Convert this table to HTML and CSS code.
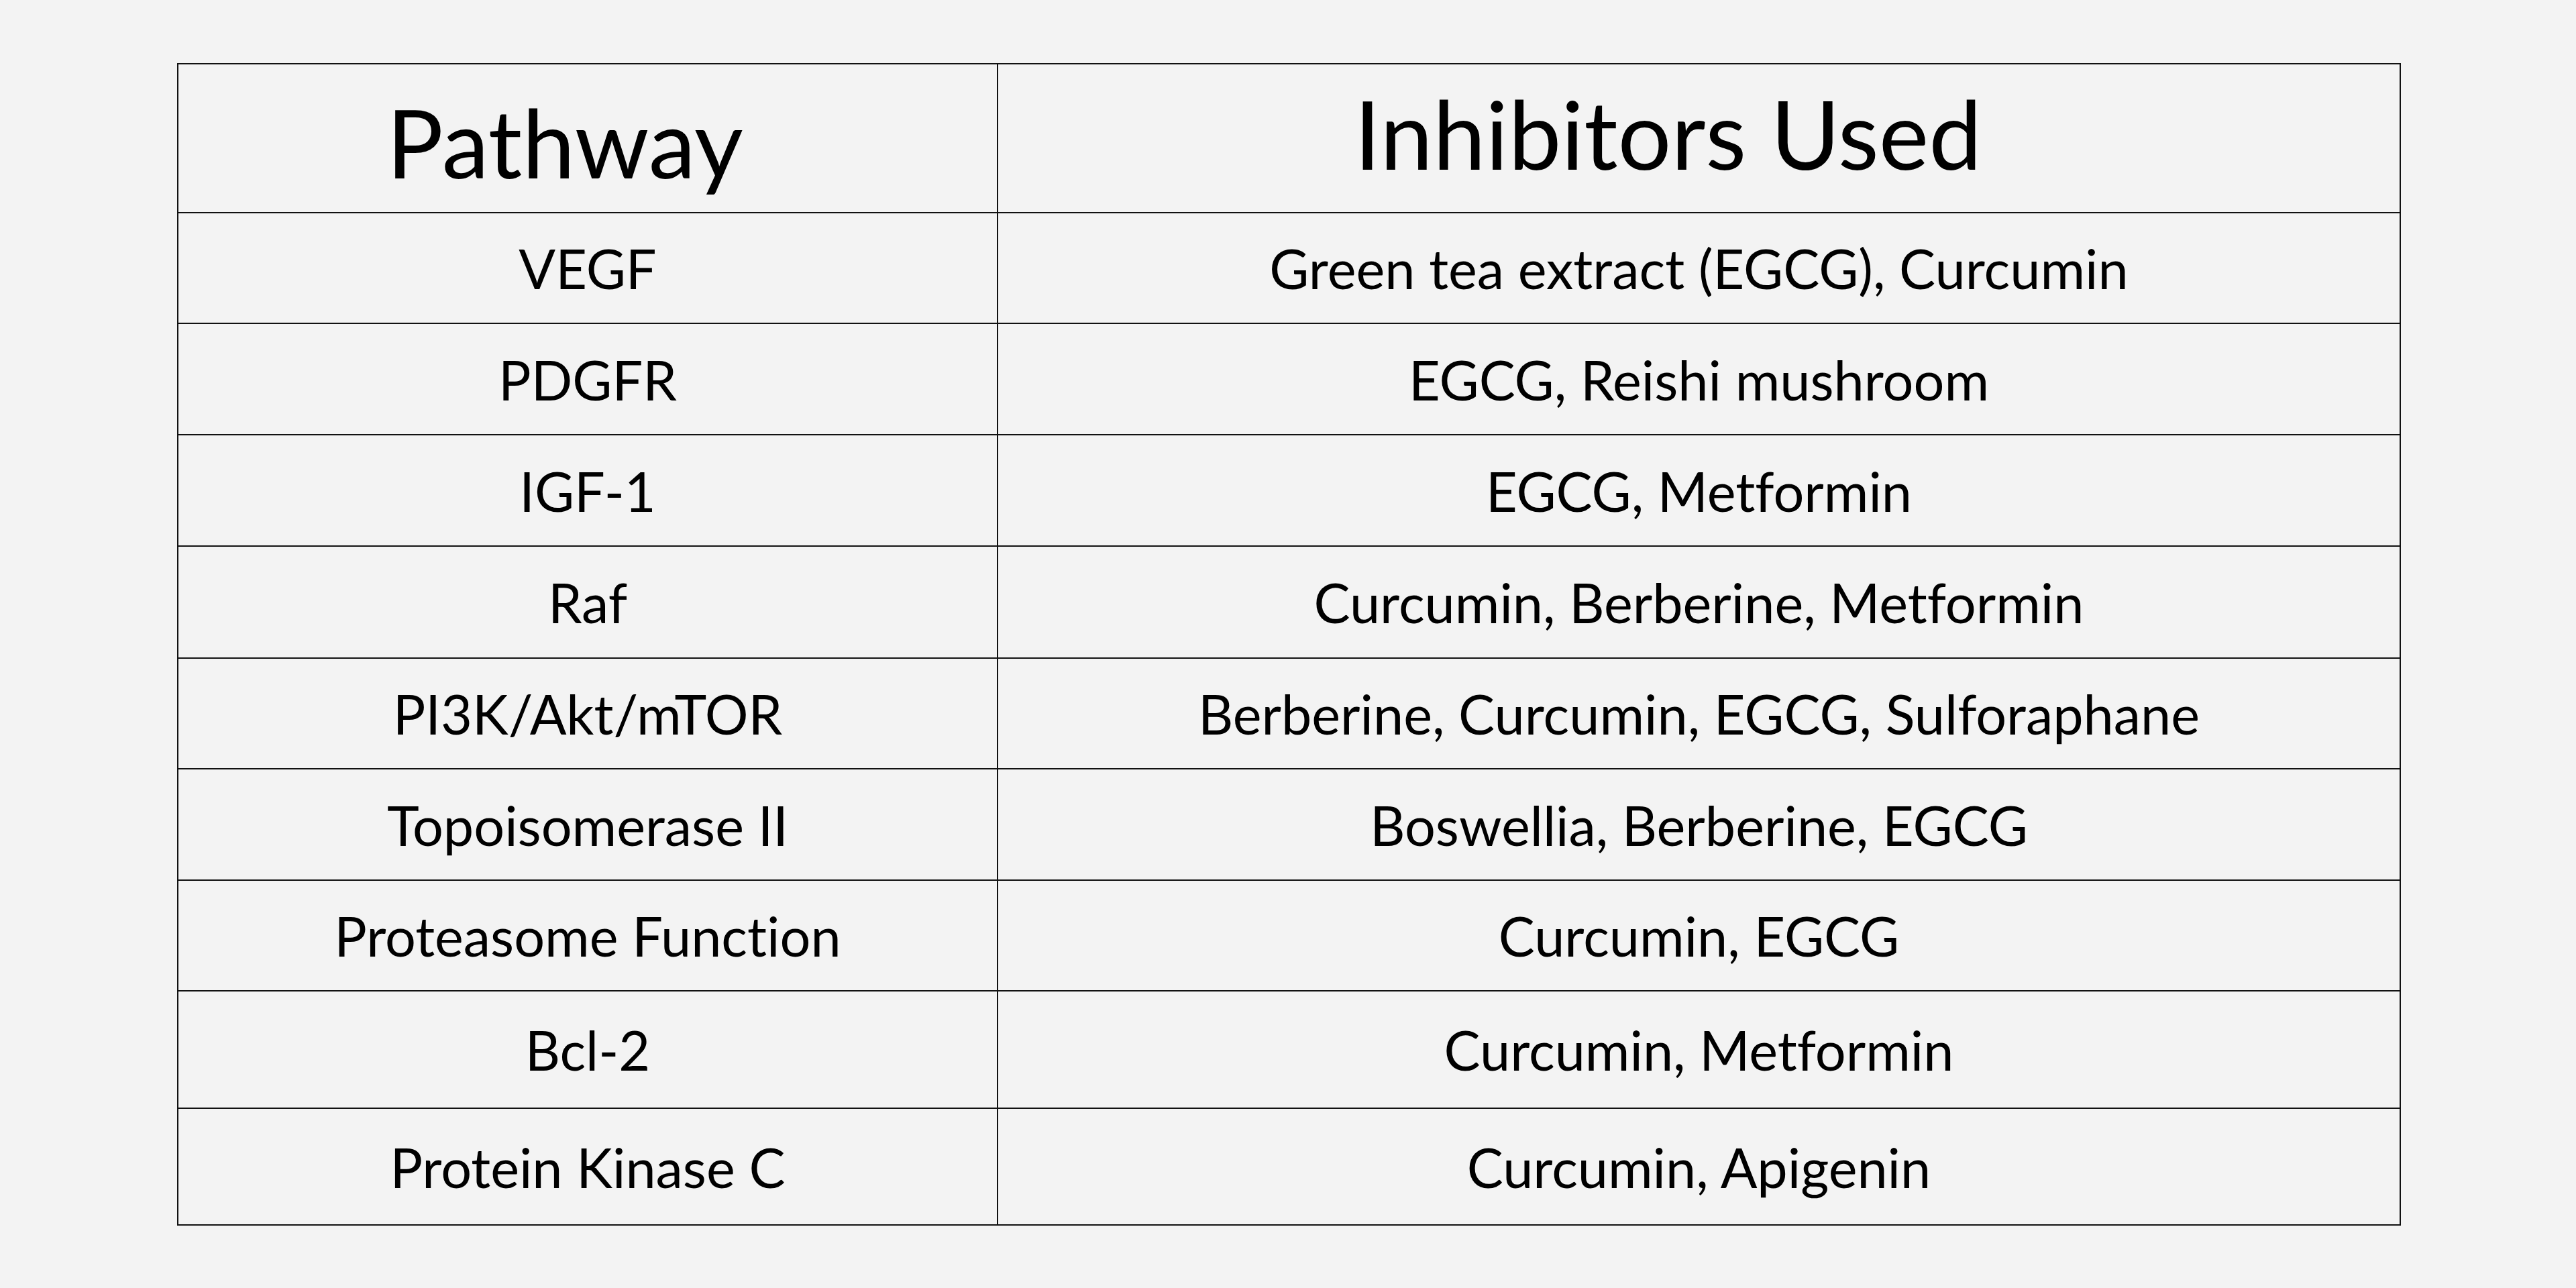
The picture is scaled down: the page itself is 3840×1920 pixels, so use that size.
FILE: index.html
```html
<!DOCTYPE html>
<html lang="en">
<head>
<meta charset="utf-8">
<title>Pathway Inhibitors</title>
<link rel="stylesheet" href="styles.css">
</head>
<body>
<main class="page">
  <table class="grid">
    <colgroup>
      <col class="col-path">
      <col class="col-inh">
    </colgroup>
    <thead>
      <tr class="head-row">
        <th class="h-path">Pathway</th>
        <th class="h-inh">Inhibitors Used</th>
      </tr>
    </thead>
    <tbody>
      <tr class="r165"><td>VEGF</td><td>Green tea extract (EGCG), Curcumin</td></tr>
      <tr class="r166"><td>PDGFR</td><td>EGCG, Reishi mushroom</td></tr>
      <tr class="r166"><td>IGF-1</td><td>EGCG, Metformin</td></tr>
      <tr class="r167"><td>Raf</td><td>Curcumin, Berberine, Metformin</td></tr>
      <tr class="r165"><td>PI3K/Akt/mTOR</td><td>Berberine, Curcumin, EGCG, Sulforaphane</td></tr>
      <tr class="r166"><td>Topoisomerase II</td><td>Boswellia, Berberine, EGCG</td></tr>
      <tr class="r165"><td>Proteasome Function</td><td>Curcumin, EGCG</td></tr>
      <tr class="r175"><td>Bcl-2</td><td>Curcumin, Metformin</td></tr>
      <tr class="r174"><td>Protein Kinase C</td><td>Curcumin, Apigenin</td></tr>
    </tbody>
  </table>
</main>
</body>
</html>
```

FILE: styles.css
```css
html, body {
  margin: 0;
  padding: 0;
  background: #f3f3f3;
}

.page {
  padding: 94px 0 0 264px;
}

.grid {
  border-collapse: collapse;
  font-family: Lato, "Open Sans", sans-serif;
  font-variant-ligatures: none;
  font-feature-settings: "liga" 0, "dlig" 0, "clig" 0;
  color: #000;
  table-layout: fixed;
  width: 3313px;
}

.col-path { width: 1222px; }
.col-inh { width: 2091px; }

.grid th,
.grid td {
  border: 2px solid #111;
  padding: 0;
  text-align: center;
  vertical-align: middle;
  font-weight: 400;
}

.grid td {
  font-size: 81px;
}

.grid th {
  font-size: 141px;
}

.grid .h-path {
  padding-top: 10px;
  padding-right: 68px;
}

.grid .h-inh {
  padding-bottom: 16px;
  padding-right: 92px;
}

.head-row { height: 222px; }
.r165 { height: 165px; }
.r166 { height: 166px; }
.r167 { height: 167px; }
.r174 { height: 174px; }
.r175 { height: 175px; }
```
